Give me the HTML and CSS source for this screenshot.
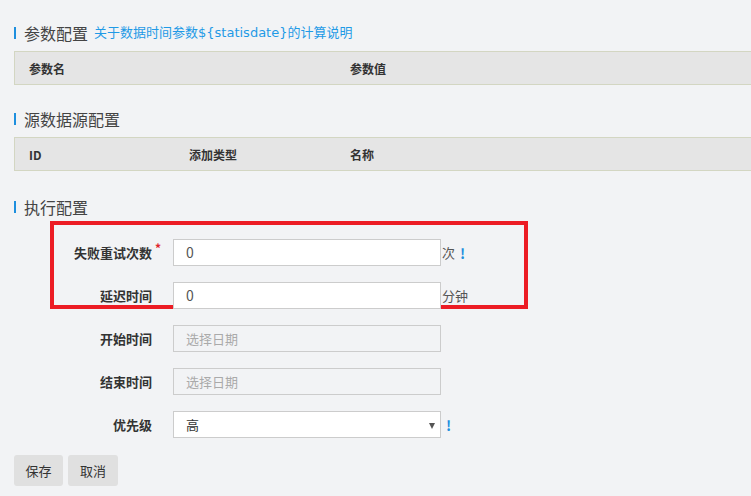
FILE: index.html
```html
<!DOCTYPE html>
<html lang="zh">
<head>
<meta charset="utf-8">
<title>配置</title>
<link rel="stylesheet" href="styles.css">
</head>
<body>
<div class="page">
  <div class="section-title first">
    <span class="bar"></span><span class="title-text">参数配置</span><a class="title-link">关于数据时间参数${statisdate}的计算说明</a>
  </div>
  <div class="table-head">
    <span class="col c-param">参数名</span><span class="col">参数值</span>
  </div>

  <div class="section-title">
    <span class="bar"></span><span class="title-text">源数据源配置</span>
  </div>
  <div class="table-head">
    <span class="col c-id">ID</span><span class="col c-type">添加类型</span><span class="col">名称</span>
  </div>

  <div class="section-title third">
    <span class="bar"></span><span class="title-text">执行配置</span>
  </div>

  <div class="form">
    <div class="highlight"></div>
    <div class="row">
      <label class="label">失败重试次数<span class="star">*</span></label>
      <div class="input">0</div>
      <span class="unit">次</span><span class="tip">!</span>
    </div>
    <div class="row">
      <label class="label">延迟时间</label>
      <div class="input">0</div>
      <span class="unit">分钟</span>
    </div>
    <div class="row">
      <label class="label">开始时间</label>
      <div class="input disabled">选择日期</div>
    </div>
    <div class="row">
      <label class="label">结束时间</label>
      <div class="input disabled">选择日期</div>
    </div>
    <div class="row">
      <label class="label">优先级</label>
      <div class="input select">高<span class="arrow"></span></div>
      <span class="tip sel-tip">!</span>
    </div>
  </div>

  <div class="actions">
    <button class="btn">保存</button><button class="btn">取消</button>
  </div>
</div>
</body>
</html>
```

FILE: styles.css
```css
html, body {
  margin: 0;
  padding: 0;
  background: #f2f3f5;
  overflow: hidden;
}
body {
  font-family: "Noto Sans CJK SC", "Noto Sans", sans-serif;
  color: #333;
}
.page {
  padding: 0 0 0 14px;
  position: relative;
}
.section-title {
  display: flex;
  align-items: center;
  height: 20px;
  margin-top: 24px;
  margin-bottom: 8px;
}
.section-title.first { margin-top: 23px; }
.section-title.third { margin-top: 26px; }
.bar {
  width: 2px;
  height: 12px;
  background: #1e8fde;
  margin-right: 8px;
}
.title-text {
  font-size: 16px;
  color: #444;
  line-height: 20px;
}
.title-link {
  font-family: "DejaVu Sans", "Noto Sans CJK SC", sans-serif;
  font-size: 13px;
  color: #1f9ae6;
  margin-left: 6px;
  line-height: 20px;
}
.table-head {
  display: flex;
  align-items: center;
  height: 32px;
  border-top: 1px solid #d3d6c2;
  border-bottom: 1px solid #d3d6c2;
  border-left: 1px solid #d3d6c2;
  background: #e5e5e5;
  margin-right: -30px;
  padding-left: 14px;
  font-size: 12px;
  font-weight: bold;
  color: #333;
}
.c-param { width: 321px; }
.c-id { width: 160px; }
.c-type { width: 161px; }

.form {
  position: relative;
  margin-top: 22px;
  display: flex;
  flex-direction: column;
  gap: 16px;
}
.highlight {
  position: absolute;
  left: 36px;
  top: -18px;
  width: 470px;
  height: 80px;
  border: 4px solid #ec1c24;
  pointer-events: none;
}
.row {
  display: flex;
  align-items: center;
  height: 27px;
}
.label {
  width: 138px;
  padding-right: 21px;
  text-align: right;
  font-size: 13px;
  font-weight: bold;
  color: #333;
  white-space: nowrap;
}
.star {
  display: inline-block;
  width: 8px;
  margin-right: -8px;
  color: #e0242a;
  font-size: 12px;
  vertical-align: top;
  position: relative;
  top: -4px;
  left: 3px;
  text-align: left;
}
.input {
  box-sizing: border-box;
  width: 268px;
  height: 27px;
  border: 1px solid #cccccc;
  background: #fff;
  padding-left: 12px;
  font-size: 14px;
  line-height: 25px;
  color: #555;
  position: relative;
}
.input.disabled {
  background: #f2f3f5;
  color: #aaa;
  font-size: 13px;
}
.input.select {
  font-size: 13px;
  color: #333;
}
.arrow {
  position: absolute;
  right: 5px;
  top: 11px;
  width: 0;
  height: 0;
  border-left: 3px solid transparent;
  border-right: 3px solid transparent;
  border-top: 6px solid #555;
}
.unit {
  font-size: 13px;
  color: #555;
  margin-left: 1px;
}
.tip {
  font-size: 14px;
  font-weight: bold;
  color: #1e8fde;
  margin-left: 5px;
}
.sel-tip { margin-left: 5px; }
.actions {
  margin-top: 17px;
  display: flex;
  gap: 5px;
}
.btn {
  font-family: "Noto Sans CJK SC", "Noto Sans", sans-serif;
  width: 49px;
  height: 31px;
  border: none;
  border-radius: 3px;
  background: #e0e0e0;
  font-size: 13px;
  color: #333;
  padding: 0;
}
.btn + .btn { width: 50px; }
```
